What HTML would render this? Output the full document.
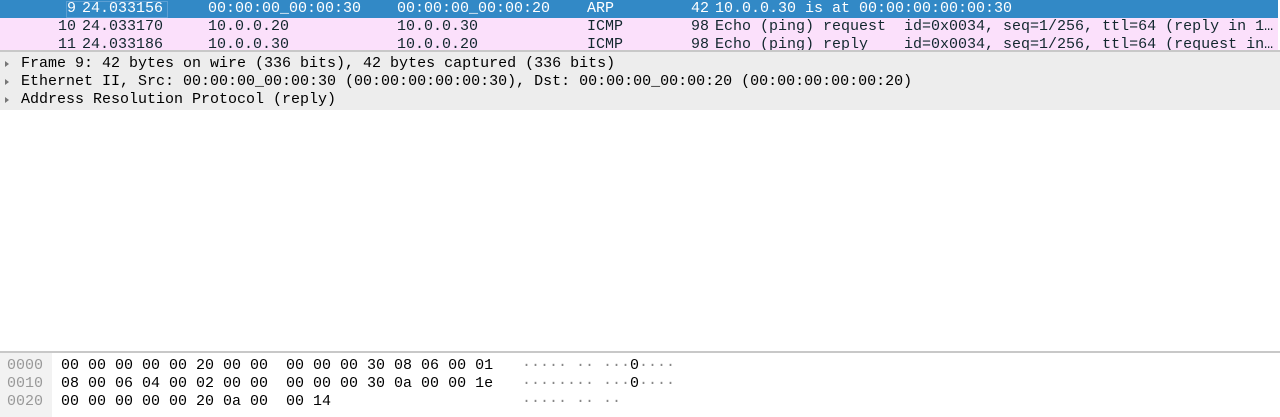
<!DOCTYPE html><html><head><style>
body{margin:0;width:1280px;height:417px;overflow:hidden;background:#fff;font-family:"Liberation Mono",monospace;font-size:15px;color:#000;position:relative}
.r{position:absolute;left:0;width:1278px;height:18px;line-height:18px;white-space:pre}
.r span{position:absolute;top:0}
.sel{background:#3289c6;color:#fff}
.pk{background:#fbe0fb;color:#12272e}
.d{position:absolute;left:0;width:1280px;height:18px;line-height:18px;white-space:pre;color:#000}
.d span{position:absolute;left:21px}
.tri{position:absolute;left:5px;top:6px;width:0;height:0;border-left:4px solid #777;border-top:3px solid transparent;border-bottom:3px solid transparent}
.h{position:absolute;left:0;height:18px;line-height:18px;white-space:pre;width:1280px}
.h .o{position:absolute;left:7px;color:#999}
.h .x{position:absolute;left:61px}
.h .a{position:absolute;left:522px;color:#888}
</style></head><body>
<div class="r sel" style="top:0"><span style="left:67px">9</span><span style="left:82px">24.033156</span><span style="left:208px">00:00:00_00:00:30</span><span style="left:397px">00:00:00_00:00:20</span><span style="left:587px">ARP</span><span style="left:691px">42</span><span style="left:715px">10.0.0.30 is at 00:00:00:00:00:30</span><div style="position:absolute;left:66px;top:1px;width:100px;height:15px;border:1px solid #5c9fd3"></div></div>
<div class="r pk" style="top:18px"><span style="left:58px">10</span><span style="left:82px">24.033170</span><span style="left:208px">10.0.0.20</span><span style="left:397px">10.0.0.30</span><span style="left:587px">ICMP</span><span style="left:691px">98</span><span style="left:715px">Echo (ping) request  id=0x0034, seq=1/256, ttl=64 (reply in 1…</span></div>
<div class="r pk" style="top:36px;height:14px;overflow:hidden"><span style="left:58px">11</span><span style="left:82px">24.033186</span><span style="left:208px">10.0.0.30</span><span style="left:397px">10.0.0.20</span><span style="left:587px">ICMP</span><span style="left:691px">98</span><span style="left:715px">Echo (ping) reply    id=0x0034, seq=1/256, ttl=64 (request in…</span></div>
<div style="position:absolute;left:0;top:50px;width:1280px;height:58px;background:#ededed;border-top:2px solid #c8c8c8"></div>
<div class="d" style="top:55px"><div class="tri"></div><span>Frame 9: 42 bytes on wire (336 bits), 42 bytes captured (336 bits)</span></div>
<div class="d" style="top:73px"><div class="tri"></div><span>Ethernet II, Src: 00:00:00_00:00:30 (00:00:00:00:00:30), Dst: 00:00:00_00:00:20 (00:00:00:00:00:20)</span></div>
<div class="d" style="top:91px"><div class="tri"></div><span>Address Resolution Protocol (reply)</span></div>
<div style="position:absolute;left:0;top:351px;width:1280px;height:2px;background:#c8c8c8"></div>
<div style="position:absolute;left:0;top:353px;width:52px;height:64px;background:#f2f2f2"></div>
<div class="h" style="top:357px"><span class="o">0000</span><span class="x">00 00 00 00 00 20 00 00  00 00 00 30 08 06 00 01</span><span class="a">····· ·· ···<b style="font-weight:normal;color:#000">0</b>····</span></div>
<div class="h" style="top:375px"><span class="o">0010</span><span class="x">08 00 06 04 00 02 00 00  00 00 00 30 0a 00 00 1e</span><span class="a">········ ···<b style="font-weight:normal;color:#000">0</b>····</span></div>
<div class="h" style="top:393px"><span class="o">0020</span><span class="x">00 00 00 00 00 20 0a 00  00 14</span><span class="a">····· ·· ··</span></div>
</body></html>
